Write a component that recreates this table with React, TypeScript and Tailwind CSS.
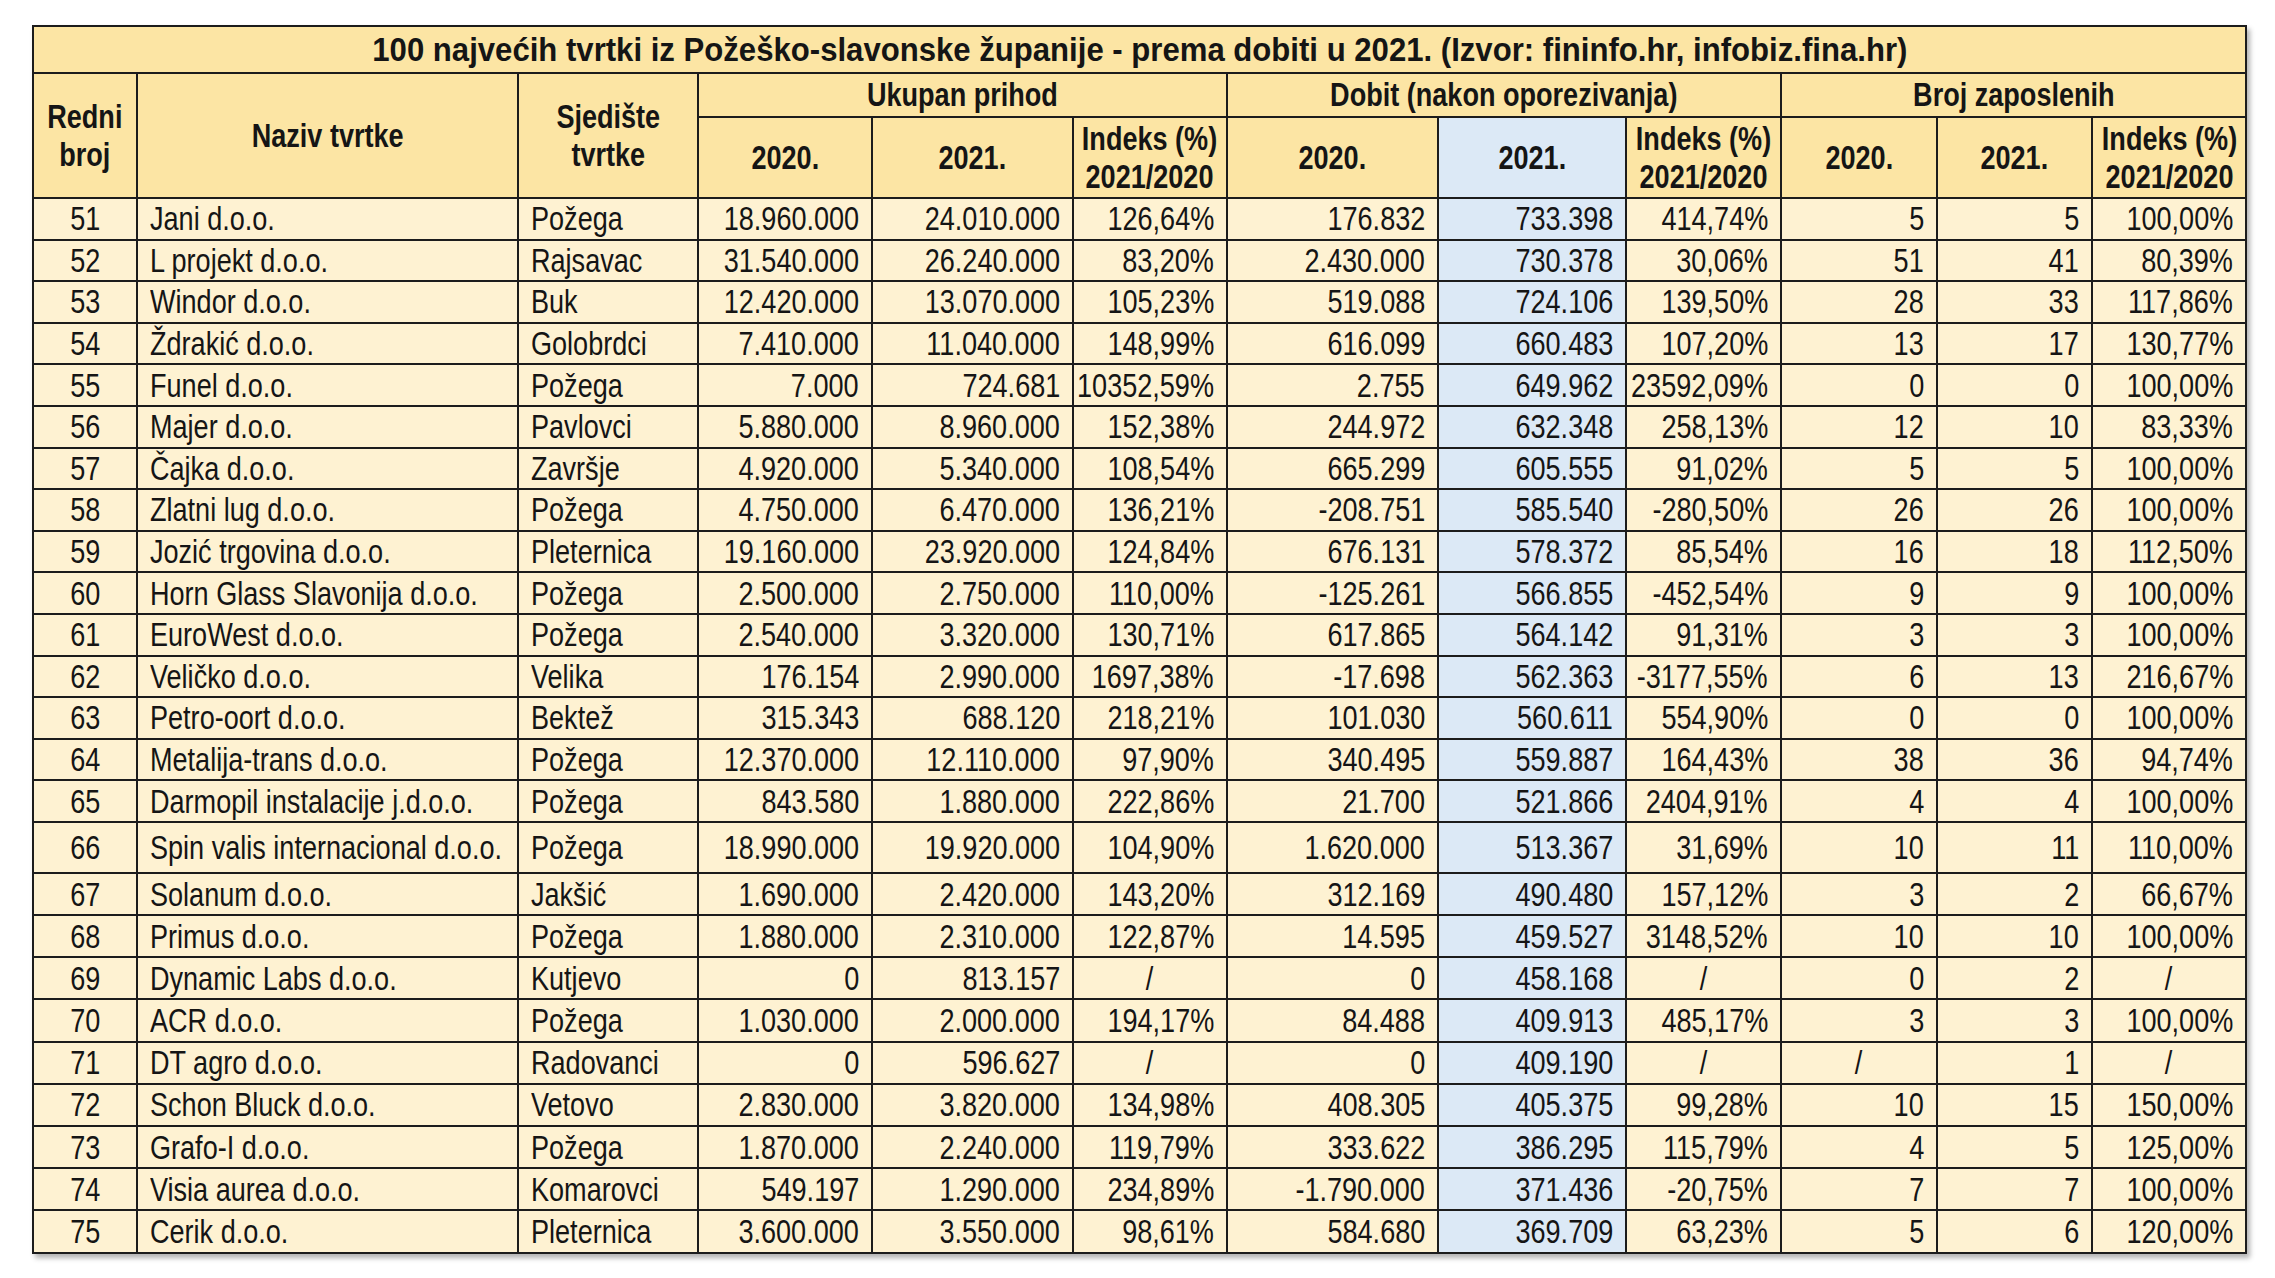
const rows: string[][] = [
  ["51", "Jani d.o.o.", "Požega", "18.960.000", "24.010.000", "126,64%", "176.832", "733.398", "414,74%", "5", "5", "100,00%"],
  ["52", "L projekt d.o.o.", "Rajsavac", "31.540.000", "26.240.000", "83,20%", "2.430.000", "730.378", "30,06%", "51", "41", "80,39%"],
  ["53", "Windor d.o.o.", "Buk", "12.420.000", "13.070.000", "105,23%", "519.088", "724.106", "139,50%", "28", "33", "117,86%"],
  ["54", "Ždrakić d.o.o.", "Golobrdci", "7.410.000", "11.040.000", "148,99%", "616.099", "660.483", "107,20%", "13", "17", "130,77%"],
  ["55", "Funel d.o.o.", "Požega", "7.000", "724.681", "10352,59%", "2.755", "649.962", "23592,09%", "0", "0", "100,00%"],
  ["56", "Majer d.o.o.", "Pavlovci", "5.880.000", "8.960.000", "152,38%", "244.972", "632.348", "258,13%", "12", "10", "83,33%"],
  ["57", "Čajka d.o.o.", "Završje", "4.920.000", "5.340.000", "108,54%", "665.299", "605.555", "91,02%", "5", "5", "100,00%"],
  ["58", "Zlatni lug d.o.o.", "Požega", "4.750.000", "6.470.000", "136,21%", "-208.751", "585.540", "-280,50%", "26", "26", "100,00%"],
  ["59", "Jozić trgovina d.o.o.", "Pleternica", "19.160.000", "23.920.000", "124,84%", "676.131", "578.372", "85,54%", "16", "18", "112,50%"],
  ["60", "Horn Glass Slavonija d.o.o.", "Požega", "2.500.000", "2.750.000", "110,00%", "-125.261", "566.855", "-452,54%", "9", "9", "100,00%"],
  ["61", "EuroWest d.o.o.", "Požega", "2.540.000", "3.320.000", "130,71%", "617.865", "564.142", "91,31%", "3", "3", "100,00%"],
  ["62", "Veličko d.o.o.", "Velika", "176.154", "2.990.000", "1697,38%", "-17.698", "562.363", "-3177,55%", "6", "13", "216,67%"],
  ["63", "Petro-oort d.o.o.", "Bektež", "315.343", "688.120", "218,21%", "101.030", "560.611", "554,90%", "0", "0", "100,00%"],
  ["64", "Metalija-trans d.o.o.", "Požega", "12.370.000", "12.110.000", "97,90%", "340.495", "559.887", "164,43%", "38", "36", "94,74%"],
  ["65", "Darmopil instalacije j.d.o.o.", "Požega", "843.580", "1.880.000", "222,86%", "21.700", "521.866", "2404,91%", "4", "4", "100,00%"],
  ["66", "Spin valis internacional d.o.o.", "Požega", "18.990.000", "19.920.000", "104,90%", "1.620.000", "513.367", "31,69%", "10", "11", "110,00%"],
  ["67", "Solanum d.o.o.", "Jakšić", "1.690.000", "2.420.000", "143,20%", "312.169", "490.480", "157,12%", "3", "2", "66,67%"],
  ["68", "Primus d.o.o.", "Požega", "1.880.000", "2.310.000", "122,87%", "14.595", "459.527", "3148,52%", "10", "10", "100,00%"],
  ["69", "Dynamic Labs d.o.o.", "Kutjevo", "0", "813.157", "/", "0", "458.168", "/", "0", "2", "/"],
  ["70", "ACR d.o.o.", "Požega", "1.030.000", "2.000.000", "194,17%", "84.488", "409.913", "485,17%", "3", "3", "100,00%"],
  ["71", "DT agro d.o.o.", "Radovanci", "0", "596.627", "/", "0", "409.190", "/", "/", "1", "/"],
  ["72", "Schon Bluck d.o.o.", "Vetovo", "2.830.000", "3.820.000", "134,98%", "408.305", "405.375", "99,28%", "10", "15", "150,00%"],
  ["73", "Grafo-I d.o.o.", "Požega", "1.870.000", "2.240.000", "119,79%", "333.622", "386.295", "115,79%", "4", "5", "125,00%"],
  ["74", "Visia aurea d.o.o.", "Komarovci", "549.197", "1.290.000", "234,89%", "-1.790.000", "371.436", "-20,75%", "7", "7", "100,00%"],
  ["75", "Cerik d.o.o.", "Pleternica", "3.600.000", "3.550.000", "98,61%", "584.680", "369.709", "63,23%", "5", "6", "120,00%"],
];

const widths = [104, 381, 180, 174, 201, 154, 211, 188, 155, 156, 155, 154];

type Align = "left" | "center" | "right";

const justify: Record<Align, string> = {
  left: "justify-start",
  center: "justify-center",
  right: "justify-end",
};
const origin: Record<Align, string> = {
  left: "origin-left",
  center: "origin-center",
  right: "origin-right",
};

// Arial Narrow look: Liberation Sans squeezed horizontally
function Narrow({ align, children }: { align: Align; children: React.ReactNode }) {
  return (
    <div className={`flex ${justify[align]}`}>
      <span className={`shrink-0 whitespace-nowrap scale-x-[0.82] ${origin[align]}`}>{children}</span>
    </div>
  );
}

function Cell({ value, col }: { value: string; col: number }) {
  let align: Align = "right";
  let pad = "pr-[12px]";
  if (col === 0) {
    align = "center";
    pad = "";
  } else if (col === 1 || col === 2) {
    align = "left";
    pad = "pl-[12px]";
  } else if (value === "/") {
    align = "center";
    pad = "";
  }
  return (
    <td
      className={`border-2 border-[#1c1c1c] p-0 leading-none ${pad} ${
        col === 7 ? "bg-[#dce9f6]" : "bg-[#fef2d2]"
      }`}
    >
      <Narrow align={align}>{value}</Narrow>
    </td>
  );
}

function Head({ children }: { children: React.ReactNode }) {
  return <Narrow align="center">{children}</Narrow>;
}

function rowHeight(n: number) {
  if (n === 66) return "h-[51px]";
  if (n < 66) return "h-[41.6px]";
  return "h-[42.2px]";
}

export default function App() {
  const th = "border-2 border-[#1c1c1c] bg-[#fce5a4] font-bold p-0 leading-[1.15]";
  return (
    <div className="w-[2275px] h-[1278px] bg-white pt-[25px] pl-[32px]">
      <table className="table-fixed border-collapse w-[2213px] text-[#151515] text-[33px] shadow-[3px_4px_5px_rgba(0,0,0,0.3)] font-['Liberation_Sans','Arial',sans-serif]">
        <colgroup>
          {widths.map((w, i) => (
            <col key={i} style={{ width: w }} />
          ))}
        </colgroup>
        <thead>
          <tr className="h-[47px]">
            <th colSpan={12} className={`${th} text-[34px]`}>
              <div className="flex justify-center">
                <span className="shrink-0 whitespace-nowrap scale-x-[0.915] origin-center">
                  100 najvećih tvrtki iz Požeško-slavonske županije - prema dobiti u 2021. (Izvor: fininfo.hr,
                  infobiz.fina.hr)
                </span>
              </div>
            </th>
          </tr>
          <tr className="h-[44px]">
            <th rowSpan={2} className={th}>
              <Head>
                Redni
                <br />
                broj
              </Head>
            </th>
            <th rowSpan={2} className={th}>
              <Head>Naziv tvrtke</Head>
            </th>
            <th rowSpan={2} className={th}>
              <Head>
                Sjedište
                <br />
                tvrtke
              </Head>
            </th>
            <th colSpan={3} className={th}>
              <Head>Ukupan prihod</Head>
            </th>
            <th colSpan={3} className={th}>
              <Head>Dobit (nakon oporezivanja)</Head>
            </th>
            <th colSpan={3} className={th}>
              <Head>Broj zaposlenih</Head>
            </th>
          </tr>
          <tr className="h-[81px]">
            <th className={th}>
              <Head>2020.</Head>
            </th>
            <th className={th}>
              <Head>2021.</Head>
            </th>
            <th className={th}>
              <Head>
                Indeks (%)
                <br />
                2021/2020
              </Head>
            </th>
            <th className={th}>
              <Head>2020.</Head>
            </th>
            <th className={`${th} !bg-[#dce9f6]`}>
              <Head>2021.</Head>
            </th>
            <th className={th}>
              <Head>
                Indeks (%)
                <br />
                2021/2020
              </Head>
            </th>
            <th className={th}>
              <Head>2020.</Head>
            </th>
            <th className={th}>
              <Head>2021.</Head>
            </th>
            <th className={th}>
              <Head>
                Indeks (%)
                <br />
                2021/2020
              </Head>
            </th>
          </tr>
        </thead>
        <tbody>
          {rows.map((r) => (
            <tr key={r[0]} className={rowHeight(Number(r[0]))}>
              {r.map((v, i) => (
                <Cell key={i} value={v} col={i} />
              ))}
            </tr>
          ))}
        </tbody>
      </table>
    </div>
  );
}
